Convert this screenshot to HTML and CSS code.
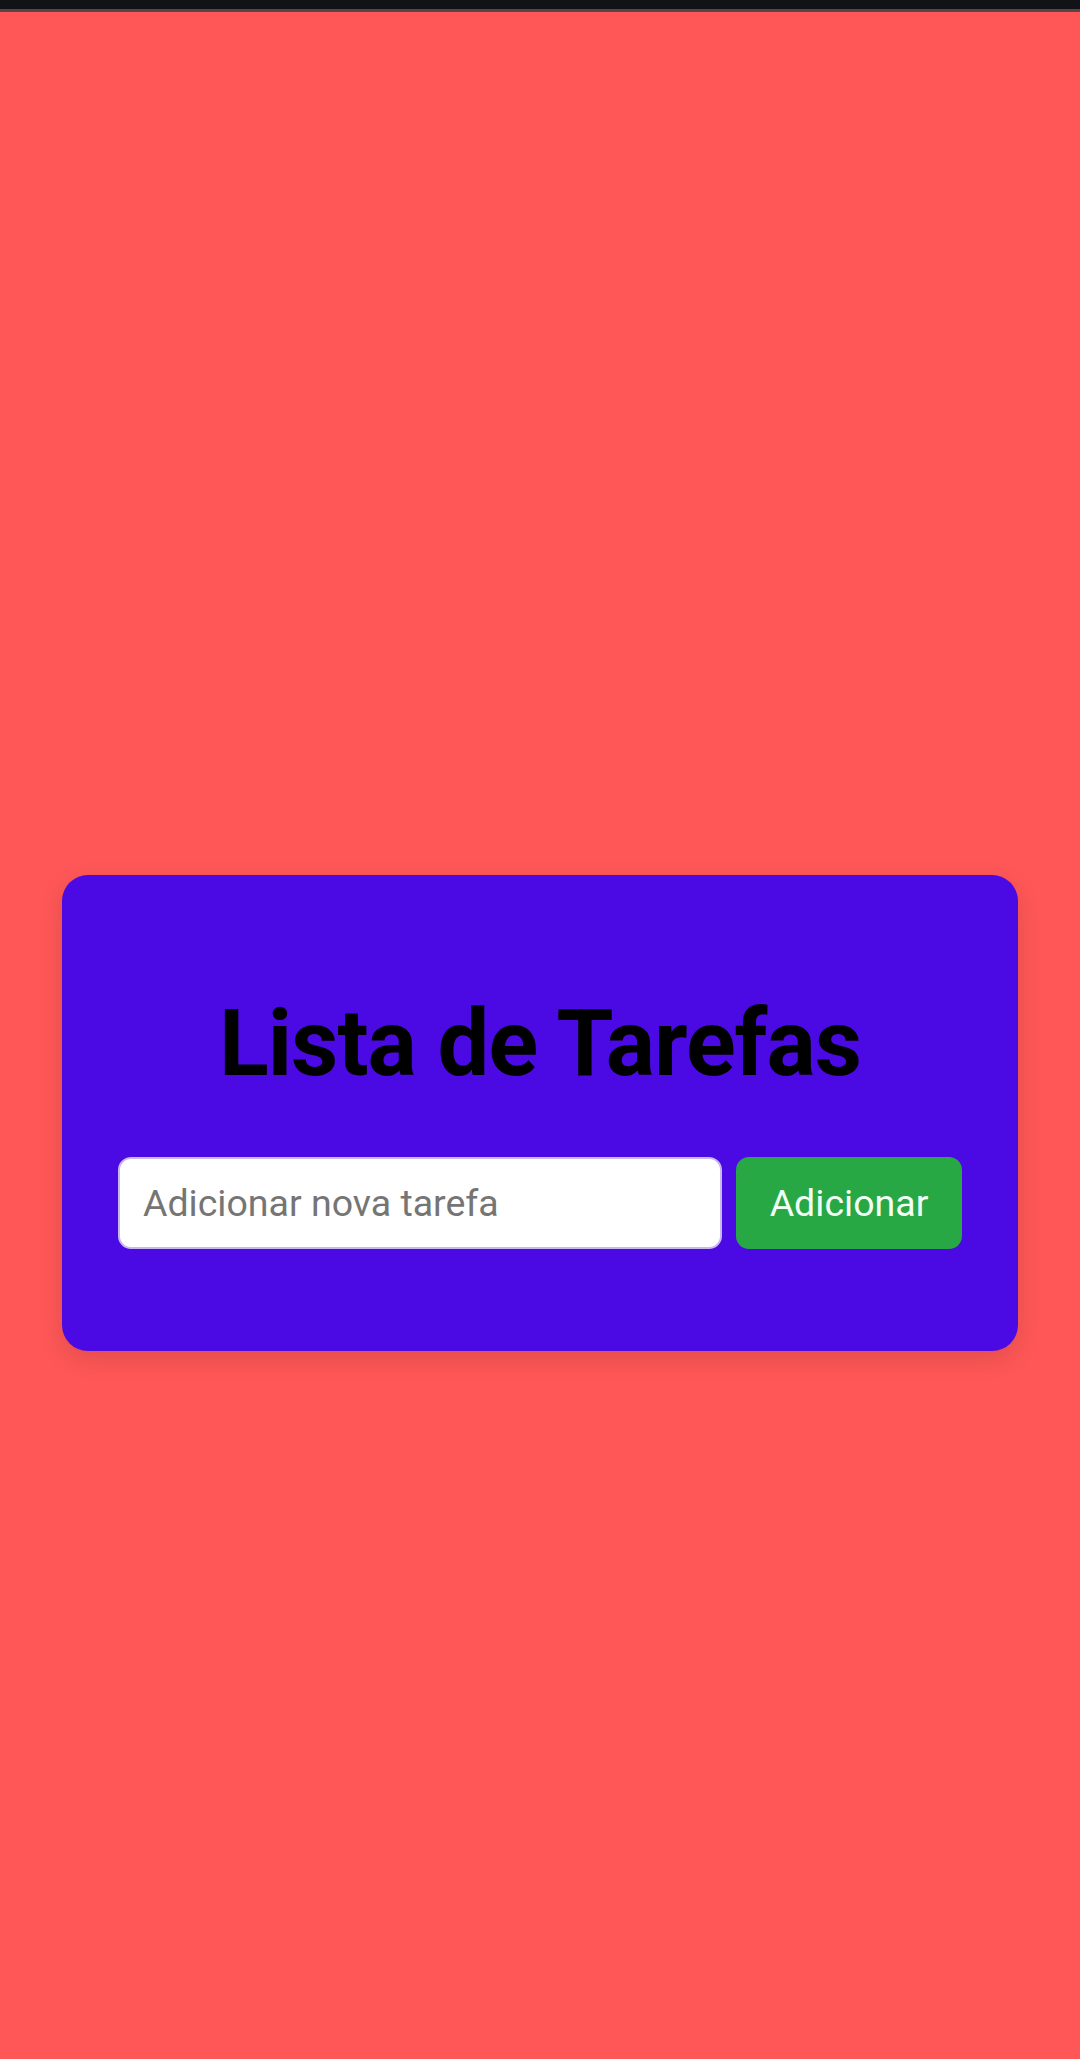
FILE: index.html
```html
<!DOCTYPE html>
<html lang="pt">
<head>
<meta charset="utf-8">
<title>Lista de Tarefas</title>
<link rel="stylesheet" href="styles.css">
</head>
<body>
<div class="statusbar"></div>
<main class="page">
  <section class="card">
    <h1 class="title">Lista de Tarefas</h1>
    <form class="form">
      <input class="task-input" type="text" placeholder="Adicionar nova tarefa">
      <button class="add-btn" type="button">Adicionar</button>
    </form>
  </section>
</main>
</body>
</html>
```

FILE: styles.css
```css
html, body {
  margin: 0;
  padding: 0;
}
body {
  background: #ff5757;
  font-family: Roboto, "Noto Sans", sans-serif;
  width: 1080px;
  height: 2059px;
  overflow: hidden;
}
.statusbar {
  height: 9px;
  background: #121317;
  border-bottom: 3px solid #5a4446;
}
.page {
  height: 2047px;
  box-sizing: border-box;
  padding: 155px 62px 0;
  display: flex;
  align-items: center;
  justify-content: center;
}
.card {
  width: 956px;
  height: 476px;
  box-sizing: border-box;
  background: #4b0ae3;
  border-radius: 26px;
  padding: 115px 56px 0;
  box-shadow: 0 8px 24px rgba(0, 0, 0, 0.12);
}
.title {
  margin: 0;
  text-align: center;
  font-size: 92px;
  letter-spacing: -1px;
  font-weight: 700;
  line-height: 108px;
  color: #000;
}
.form {
  margin-top: 59px;
  display: flex;
  gap: 14px;
}
.task-input {
  flex: 1;
  height: 92px;
  box-sizing: border-box;
  border: 2px solid #c9b8f0;
  border-radius: 13px;
  background: #fff;
  padding: 0 23px;
  font-family: Roboto, "Noto Sans", sans-serif;
  font-size: 37.5px;
  color: #333;
  outline: none;
}
.task-input::placeholder {
  color: #757575;
}
.add-btn {
  width: 226px;
  height: 92px;
  border: none;
  border-radius: 13px;
  background: #28a745;
  color: #f2fff4;
  font-family: Roboto, "Noto Sans", sans-serif;
  font-size: 37.5px;
  padding: 0;
}
```
